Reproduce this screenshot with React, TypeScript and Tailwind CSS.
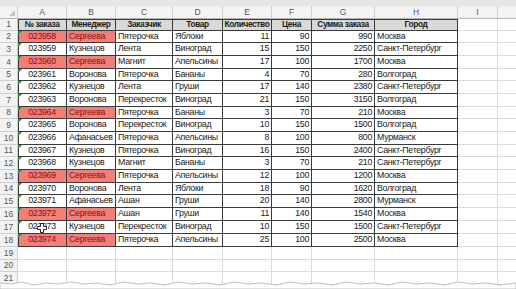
import React from 'react';

type Row = {
  id: string;
  manager: string;
  client: string;
  product: string;
  qty: number;
  price: number;
  sum: number;
  city: string;
  h: string;
};

const raw: [string, string, string, string, number, number, string][] = [
  ['023958', 'Сергеева', 'Пятерочка', 'Яблоки', 11, 90, 'Москва'],
  ['023959', 'Кузнецов', 'Лента', 'Виноград', 15, 150, 'Санкт-Петербург'],
  ['023960', 'Сергеева', 'Магнит', 'Апельсины', 17, 100, 'Москва'],
  ['023961', 'Воронова', 'Пятерочка', 'Бананы', 4, 70, 'Волгоград'],
  ['023962', 'Кузнецов', 'Лента', 'Груши', 17, 140, 'Санкт-Петербург'],
  ['023963', 'Воронова', 'Перекресток', 'Виноград', 21, 150, 'Волгоград'],
  ['023964', 'Сергеева', 'Пятерочка', 'Бананы', 3, 70, 'Москва'],
  ['023965', 'Воронова', 'Перекресток', 'Виноград', 10, 150, 'Волгоград'],
  ['023966', 'Афанасьев', 'Пятерочка', 'Апельсины', 8, 100, 'Мурманск'],
  ['023967', 'Кузнецов', 'Пятерочка', 'Виноград', 16, 150, 'Санкт-Петербург'],
  ['023968', 'Кузнецов', 'Магнит', 'Бананы', 3, 70, 'Санкт-Петербург'],
  ['023969', 'Сергеева', 'Пятерочка', 'Апельсины', 12, 100, 'Москва'],
  ['023970', 'Воронова', 'Лента', 'Яблоки', 18, 90, 'Волгоград'],
  ['023971', 'Афанасьев', 'Ашан', 'Груши', 20, 140, 'Мурманск'],
  ['023972', 'Сергеева', 'Ашан', 'Груши', 11, 140, 'Москва'],
  ['023973', 'Кузнецов', 'Перекресток', 'Виноград', 10, 150, 'Санкт-Петербург'],
  ['023974', 'Сергеева', 'Пятерочка', 'Апельсины', 25, 100, 'Москва'],
];

// row heights so the 17 data rows add up to the 216px in the shot
const heights = [
  'h-[12px]', 'h-[13px]', 'h-[13px]', 'h-[12px]', 'h-[13px]', 'h-[13px]',
  'h-[12px]', 'h-[13px]', 'h-[13px]', 'h-[12px]', 'h-[13px]', 'h-[13px]',
  'h-[12px]', 'h-[13px]', 'h-[13px]', 'h-[13px]', 'h-[13px]',
];

const rows: Row[] = raw.map((r, i) => ({
  id: r[0],
  manager: r[1],
  client: r[2],
  product: r[3],
  qty: r[4],
  price: r[5],
  sum: r[4] * r[5],
  city: r[6],
  h: heights[i],
}));

const letters = [
  { l: 'A', w: 'w-[49px]' },
  { l: 'B', w: 'w-[49px]' },
  { l: 'C', w: 'w-[57px]' },
  { l: 'D', w: 'w-[50px]' },
  { l: 'E', w: 'w-[49px]' },
  { l: 'F', w: 'w-[40px]' },
  { l: 'G', w: 'w-[63px]' },
  { l: 'H', w: 'w-[83px]' },
  { l: 'I', w: 'w-[40px]' },
];

const titles = ['№ заказа', 'Менеджер', 'Заказчик', 'Товар', 'Количество', 'Цена', 'Сумма заказа', 'Город'];

const font = { fontFamily: '"Liberation Sans", Arial, sans-serif' };

const RowHead: React.FC<{ n: number; h: string }> = ({ n, h }) => (
  <div className={`${h} w-[18px] shrink-0 flex items-center justify-center bg-[#f3f3f3] border-r border-b border-[#cfcfcf] text-[8.5px] text-[#555] tracking-normal`}>
    {n}
  </div>
);

const Cell: React.FC<{ w: string; cls?: string; children?: React.ReactNode }> = ({ w, cls = '', children }) => (
  <div className={`${w} shrink-0 h-full flex items-center px-[2px] overflow-hidden whitespace-nowrap border-r border-b ${cls}`}>
    {children}
  </div>
);

const Triangle = () => (
  <span className="absolute left-0 top-0 w-0 h-0 border-t-[4px] border-r-[4px] border-t-[#2e8b3a] border-r-transparent" />
);

const Blank: React.FC<{ h: string; n: number }> = ({ h, n }) => (
  <div className={`flex ${h}`}>
    <RowHead n={n} h={h} />
    {letters.map((c) => (
      <Cell key={c.l} w={c.w} cls="border-[#dadada]" />
    ))}
    <div className="flex-1 border-b border-[#dadada]" />
  </div>
);

export default function App() {
  return (
    <div
      className="relative w-[516px] h-[289px] overflow-hidden bg-white text-[8.8px] tracking-[-0.3px] text-[#1a1a1a]"
      style={font}
    >
      <div className="h-[6px] bg-[#e6e6e6]" />
      {/* column letters */}
      <div className="flex h-[13px] bg-[#f3f3f3] border-b border-[#b5b5b5] text-[8.5px] text-[#555] tracking-normal">
        <div className="relative w-[18px] shrink-0 border-r border-[#cfcfcf]">
          <span className="absolute right-[2px] bottom-[2px] w-0 h-0 border-b-[6px] border-l-[6px] border-b-[#c4c4c4] border-l-transparent" />
        </div>
        {letters.map((c) => (
          <div key={c.l} className={`${c.w} shrink-0 flex items-center justify-center border-r border-[#cfcfcf]`}>
            {c.l}
          </div>
        ))}
        <div className="flex-1" />
      </div>

      {/* header row */}
      <div className="flex h-[12px]">
        <RowHead n={1} h="h-[12px]" />
        {titles.map((t, i) => (
          <Cell
            key={t}
            w={letters[i].w}
            cls={`justify-center font-bold bg-[#d9d9d9] border-[#3a3a3a] text-[8.4px] tracking-[-0.4px] ${i === 0 ? 'shadow-[inset_1px_1px_0_#3a3a3a]' : 'shadow-[inset_0_1px_0_#3a3a3a]'}`}
          >
            {t}
          </Cell>
        ))}
        <Cell w="w-[40px]" cls="border-[#dadada]" />
        <div className="flex-1 border-b border-[#dadada]" />
      </div>

      {rows.map((r, i) => {
        const red = r.manager === 'Сергеева';
        return (
          <div key={r.id} className={`flex ${r.h}`}>
            <RowHead n={i + 2} h={r.h} />
            <Cell
              w="w-[49px]"
              cls={`relative justify-center border-[#3a3a3a] shadow-[inset_1px_0_0_#3a3a3a] ${red ? 'bg-[#f27f78] text-[#8a0f14]' : ''}`}
            >
              <Triangle />
              {r.id}
            </Cell>
            <Cell w="w-[49px]" cls={`border-[#3a3a3a] ${red ? 'bg-[#f27f78] text-[#8a0f14]' : ''}`}>
              {r.manager}
            </Cell>
            <Cell w="w-[57px]" cls="border-[#3a3a3a]">{r.client}</Cell>
            <Cell w="w-[50px]" cls="border-[#3a3a3a]">{r.product}</Cell>
            <Cell w="w-[49px]" cls="justify-end border-[#3a3a3a]">{r.qty}</Cell>
            <Cell w="w-[40px]" cls="justify-end border-[#3a3a3a]">{r.price}</Cell>
            <Cell w="w-[63px]" cls="justify-end border-[#3a3a3a]">{r.sum}</Cell>
            <Cell w="w-[83px]" cls="border-[#3a3a3a]">{r.city}</Cell>
            <Cell w="w-[40px]" cls="border-[#dadada]" />
            <div className="flex-1 border-b border-[#dadada]" />
          </div>
        );
      })}

      <Blank n={19} h="h-[13px]" />
      <Blank n={20} h="h-[12px]" />
      <Blank n={21} h="h-[13px]" />

      {/* cursor over row 17 */}
      <svg className="absolute left-[37px] top-[223px]" width="10" height="10" viewBox="0 0 10 10">
        <path d="M3.5 0.5h3v3h3v3h-3v3h-3v-3h-3v-3h3z" fill="#fff" stroke="#222" strokeWidth="1" />
      </svg>

      {/* torn paper edge */}
      <svg className="absolute left-0 bottom-0" width="516" height="10" viewBox="0 0 516 10">
        <path
          d="M0 4 L12 5 L22 3 L34 6 L46 4 L58 5 L70 3 L84 5 L96 4 L110 6 L124 3 L138 5 L150 4 L164 6 L178 3 L192 5 L206 4 L220 6 L234 3 L248 5 L262 4 L276 6 L290 3 L304 5 L318 4 L332 6 L346 3 L360 5 L374 4 L388 6 L402 3 L416 5 L430 4 L444 6 L458 3 L472 5 L486 4 L500 6 L516 4 L516 10 L0 10 Z"
          fill="#fff"
          stroke="#b0b0b0"
          strokeWidth="0.8"
        />
      </svg>
    </div>
  );
}
